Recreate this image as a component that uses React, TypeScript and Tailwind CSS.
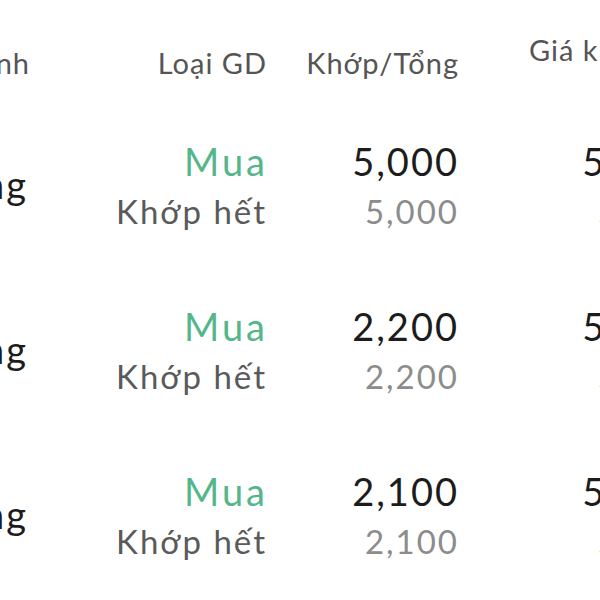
import React from "react";

const rows = [
  { qty: "5,000", price: "54,500" },
  { qty: "2,200", price: "54,500" },
  { qty: "2,100", price: "54,500" },
];

export default function App() {
  return (
    <div
      className="w-[600px] h-[600px] overflow-hidden bg-white"
      style={{ fontFamily: "Lato, 'Noto Sans', sans-serif" }}
    >
      <div className="flex h-[102px] pt-[24px] items-center text-[29px] text-[#555555] tracking-[1px]">
        <div className="w-[200px] ml-[-170px] shrink-0 text-right mr-[-1px]">Lệnh</div>
        <div className="w-[238px] shrink-0 text-right mr-[-1px]">Loại GD</div>
        <div className="w-[193px] shrink-0 text-right mr-[-1px]">Khớp/Tổng</div>
        <div className="pl-[71px] shrink-0 whitespace-nowrap self-start pt-[4px]">Giá khớp</div>
      </div>
      {rows.map((r, i) => (
        <div key={i} className="flex h-[165px] items-center">
          <div className="w-[200px] ml-[-172px] shrink-0 text-right text-[38px] text-[#1c1c1c] tracking-[2px] mr-[-2px]">
            Thường
          </div>
          <div className="w-[239px] shrink-0 text-right flex flex-col">
            <span className="leading-[52px] text-[38px] text-[#55b68c] tracking-[3px] mr-[-3px]">Mua</span>
            <span className="leading-[48px] text-[33px] text-[#5a5a5a] tracking-[2px] mr-[-2px]">Khớp hết</span>
          </div>
          <div className="w-[192px] shrink-0 text-right flex flex-col">
            <span className="leading-[52px] text-[38px] text-[#1c1c1c] tracking-[2px] mr-[-2px]">{r.qty}</span>
            <span className="leading-[48px] text-[33px] text-[#8c8c8c] tracking-[2px] mr-[-2px]">{r.qty}</span>
          </div>
          <div className="w-[254px] shrink-0 text-right flex flex-col">
            <span className="leading-[52px] text-[38px] text-[#1c1c1c] tracking-[2px] mr-[-2px]">{r.price}</span>
            <span className="leading-[48px] text-[33px] text-[#8c8c8c] tracking-[2px] mr-[-2px]">{r.price}</span>
          </div>
        </div>
      ))}
    </div>
  );
}
